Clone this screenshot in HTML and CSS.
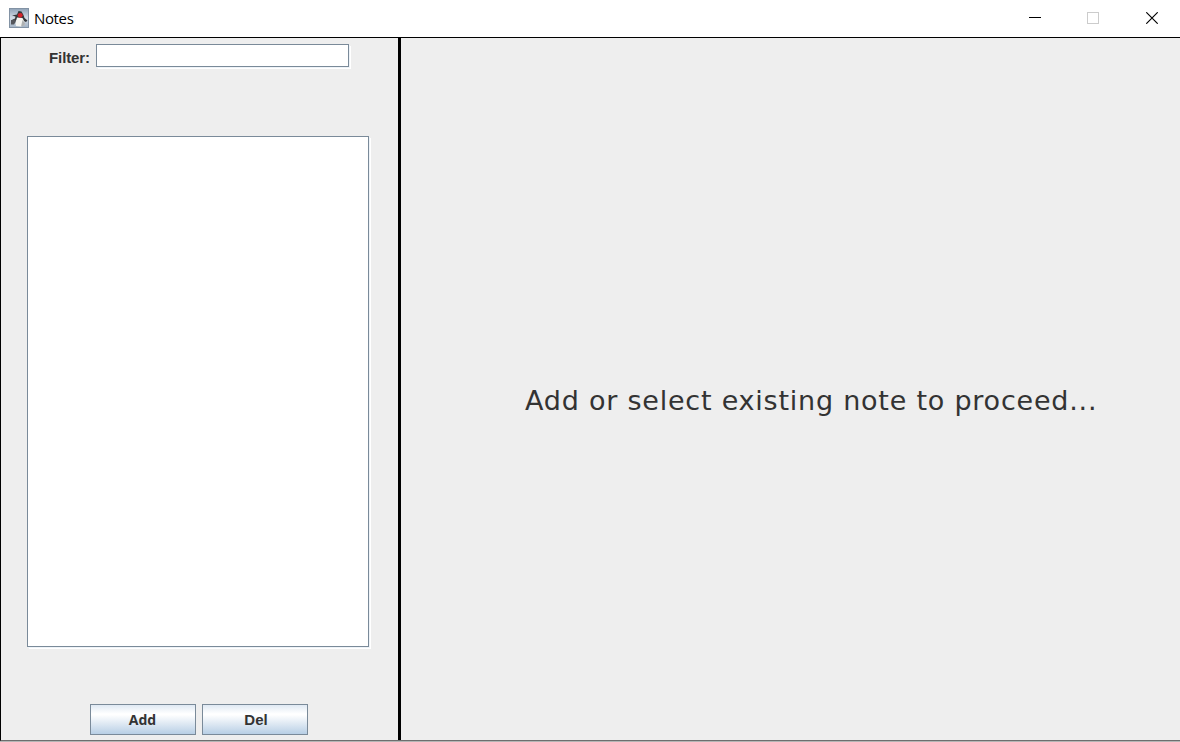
FILE: index.html
```html
<!DOCTYPE html>
<html lang="en">
<head>
<meta charset="utf-8">
<title>Notes</title>
<link rel="stylesheet" href="styles.css">
</head>
<body>
<div class="window">
  <header class="titlebar">
    <svg class="app-icon" width="20" height="20" viewBox="0 0 20 20">
      <defs>
        <linearGradient id="tile" x1="0" y1="0" x2="0" y2="1"><stop offset="0" stop-color="#8fa2b7"/><stop offset=".5" stop-color="#d3dce6"/><stop offset="1" stop-color="#a3b3c5"/></linearGradient>
        <filter id="soft" x="-10%" y="-10%" width="120%" height="120%"><feGaussianBlur stdDeviation=".45"/></filter>
      </defs>
      <rect x=".5" y=".5" width="19" height="19" fill="url(#tile)" stroke="#8292a4"/>
      <g filter="url(#soft)">
        <path d="M9.5 3 L12.5 3.5 L14.5 7 L15.5 10 L18.5 12.5 L17 14 L14.5 13 L7 12 L6 15 L2.5 15.5 L2 12.5 L6 10.5 L6.5 8.5 L3 7.5 L8 6.5Z" fill="#36383b"/>
        <path d="M8 9.5 L13.5 10 L15.5 14 L15.5 17 L12 18.5 L7 18 L6.5 15Z" fill="#f5f5f1"/>
        <path d="M2 12.5 L5.5 11 L6.5 14 L5 16.5 L2 16.5Z" fill="#54575b"/>
        <path d="M13.5 12 L16 15 L15.5 17.5 L12 18.5Z" fill="#aeb1b2"/>
      </g>
      <circle cx="11.2" cy="7.3" r="2.4" fill="#d4232b"/>
    </svg>
    <span class="title">Notes</span>
    <div class="controls">
      <svg width="12" height="12"><path d="M0 5.5H12" stroke="#000"/></svg>
      <svg width="12" height="12"><rect x=".5" y=".5" width="11" height="11" fill="none" stroke="#ccc"/></svg>
      <svg class="close" width="12" height="12"><path d="M.3 .3L11.7 11.7M11.7 .3L.3 11.7" stroke="#000" stroke-width="1.15"/></svg>
    </div>
  </header>
  <main class="content">
    <section class="sidebar">
      <div class="filter-row"><label class="filter-label" for="filter">Filter:</label><input class="filter-input sunken" id="filter" type="text"></div>
      <div class="note-list sunken"></div>
      <div class="actions"><button class="button button-add">Add</button><button class="button button-del">Del</button></div>
    </section>
    <section class="detail"><p class="message">Add or select existing note to proceed...</p></section>
  </main>
</div>
</body>
</html>
```
FILE: styles.css
```css
* { box-sizing: border-box; }
body { margin: 0; overflow: hidden; background: #fff; }
.window { width: 1180px; height: 742px; display: flex; flex-direction: column; border-bottom: 1px solid #b5b5b5; }
.titlebar { height: 37px; flex: none; display: flex; align-items: flex-start; padding: 8px 22px 0 9px; background: #fff; }
.app-icon { flex: none; }
.title { margin-left: 5px; font: 15px/20px "Open Sans", sans-serif; color: #000; letter-spacing: -0.35px; }
.controls { margin: 4px 0 0 auto; display: flex; gap: 46px; }
.controls svg { display: block; }
.controls .close { margin-left: 1px; }
.content { flex: 1; display: flex; border-top: 1px solid #000; border-left: 1px solid #000; border-bottom: 1px solid #6e6e6e; background: #eee; }
.sidebar { width: 400px; flex: none; border-right: 3px solid #000; display: flex; flex-direction: column; padding: 6px 0 5px; }
.sunken { border: 1px solid #7a8a99; background: #fff; box-shadow: 1px 1px 0 #eef3f8, 2px 2px 0 #fff; }
.filter-row { display: flex; height: 24px; padding-left: 48px; }
.filter-label { width: 47px; font: bold 15px/27px "Liberation Sans", Arial, sans-serif; color: #333; letter-spacing: -0.1px; }
.filter-input { width: 253px; height: 23px; padding: 0 3px; outline: none; }
.note-list { width: 342px; height: 511px; margin: 68px 0 0 26px; }
.actions { display: flex; gap: 6px; margin: auto 0 0 89px; }
.button { width: 106px; height: 31px; padding: 1px 0 0; border: 1px solid #7a8a99; border-radius: 0; background: linear-gradient(#dfe9f3 0%, #fff 30%, #fff 34%, #b8cfe5 100%); color: #333; font: bold 15px/20px "Liberation Sans", Arial, sans-serif; }
.button-add { padding-right: 1px; font-family: "Open Sans", sans-serif; font-size: 14px; }
.button-del { padding-left: 2px; }
.detail { flex: 1; display: flex; align-items: center; padding: 0 0 0 124px; }
.message { margin: 24px 0 0; white-space: nowrap; font: 27px/32px "DejaVu Sans", Verdana, sans-serif; letter-spacing: 0.77px; color: #333; }
```
